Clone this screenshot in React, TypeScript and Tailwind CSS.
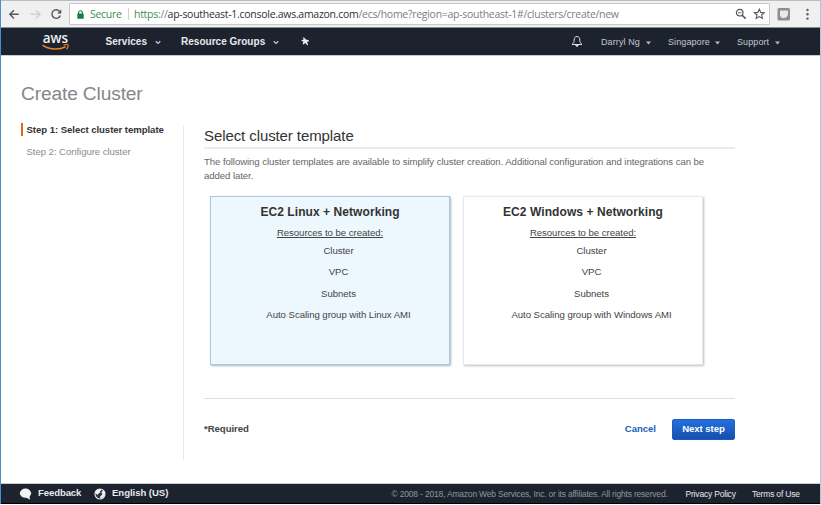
import React from "react";

const resources = ["Cluster", "VPC", "Subnets"];

function Caret() {
  return (
    <svg width="5" height="4" viewBox="0 0 5 4" className="shrink-0">
      <path d="M0 0.4h5L2.5 3.4z" fill="#b9bdc2" />
    </svg>
  );
}

function Chevron() {
  return (
    <svg width="6" height="5" viewBox="0 0 6 5" fill="none" stroke="#c9ccd0" strokeWidth="1.2" className="shrink-0">
      <path d="M0.7 1.2L3 3.4L5.3 1.2" />
    </svg>
  );
}

function BrowserBar() {
  return (
    <div className="flex h-[28px] items-start border-b border-[#8b8e92] bg-[#f0f0f1]">
      <div className="flex h-full w-full items-start border-t border-[#bdbdbf]">
        <svg width="68" height="26" viewBox="0 0 68 26" className="shrink-0" fill="none" strokeWidth="1.4">
          <path d="M17.700 13.3H9M13 9.2L8.8 13.3L13 17.4" stroke="#555759" />
          <path d="M29.500 13.3H38.500M34.800 9.2L39 13.3L34.800 17.4" stroke="#cfcfd0" />
          <path d="M58.800 10.600A4.300 4.300 0 1 0 59.300 14.500" stroke="#555759" />
          <path d="M60.300 8.400V12.600H56.100z" fill="#555759" />
        </svg>
        <div className="mt-[2px] flex h-[22px] w-[701px] shrink-0 items-center rounded-[1px] border border-[#c8c8c9] bg-white pl-[7px] pr-[4px] font-['Open_Sans',sans-serif] text-[10.5px] leading-[20px]">
          <svg width="7" height="9" viewBox="0 0 7 9" className="shrink-0">
            <path d="M1.600 4V2.700a1.900 1.900 0 0 1 3.800 0V4" fill="none" stroke="#17803c" strokeWidth="1.100" />
            <rect x="0.300" y="3.600" width="6.400" height="5.200" rx="0.400" fill="#17803c" />
          </svg>
          <span className="ml-[6px] w-[32px] whitespace-nowrap tracking-[-0.300px] text-[#3b8d55]">Secure</span>
          <span className="ml-[6px] h-[12px] w-px bg-[#cfcfcf]" />
          <span className="ml-[5px] flex-1 whitespace-nowrap tracking-[-0.280px] text-[#7d7d7d]">
            <span className="text-[#3b8d55]">https</span>://<span className="text-[#303030]">ap-southeast-1.console.aws.amazon.com</span>/ecs/home?region=ap-southeast-1#/clusters/create/new
          </span>
          <svg width="30" height="12" viewBox="0 0 30 12" className="shrink-0" fill="none" stroke="#555759" strokeWidth="1.200">
            <circle cx="4.700" cy="4.700" r="3.300" />
            <path d="M7.200 7.200L10.600 10.600" strokeWidth="1.600" />
            <path d="M3 4.700h3.400" strokeWidth="0.900" />
            <path d="M24.300 1.200l1.400 3.200 3.500.3-2.600 2.300.8 3.400-3.100-1.800-3.100 1.800.8-3.400-2.600-2.300 3.500-.3z" strokeWidth="1.100" />
          </svg>
        </div>
        <svg width="50" height="26" viewBox="0 0 50 26" className="shrink-0">
          <rect x="7.500" y="7" width="12.500" height="12.500" rx="1.500" fill="#8f8f8f" />
          <path d="M10 9.500h8v3.500q-.5 4-4.500 4h-1.500l-2-2z" fill="#e9e9e9" />
          <circle cx="37.500" cy="9" r="1.200" fill="#5c5c5c" />
          <circle cx="37.500" cy="13.300" r="1.200" fill="#5c5c5c" />
          <circle cx="37.500" cy="17.600" r="1.200" fill="#5c5c5c" />
        </svg>
      </div>
    </div>
  );
}

function AwsNav() {
  return (
    <div className="flex h-[27px] items-center bg-[#1c232f] pl-[41px] text-[#e7e9eb]">
      <div className="flex w-[27px] flex-col items-center">
        <span className="h-[12px] font-['Open_Sans',sans-serif] text-[13.5px] leading-[11px] font-semibold text-[#eef0f2]">aws</span>
        <svg width="27" height="7" viewBox="0 0 27 7" fill="none" className="mt-[-1px]">
          <path d="M0.500 1.200C6.500 5.800 17 6.400 23.800 2.600" stroke="#e58a1f" strokeWidth="1.500" />
          <path d="M21.500 1.200c2-.7 4.200-.7 4.600-.2s-.2 2.700-1.600 4.200" stroke="#e58a1f" strokeWidth="1.100" />
        </svg>
      </div>
      <span className="ml-[36.500px] w-[42px] whitespace-nowrap text-[10px] font-bold tracking-[0.050px]">Services</span>
      <span className="ml-[7px] mt-[2px]"><Chevron /></span>
      <span className="ml-[20.500px] w-[86px] whitespace-nowrap text-[10px] font-bold tracking-[0.020px]">Resource Groups</span>
      <span className="ml-[6px] mt-[2px]"><Chevron /></span>
      <svg width="9" height="9" viewBox="0 0 9 9" className="ml-[22px] shrink-0" fill="#e7e9eb">
        <path d="M2.900 0.300L4.600 2.300L7.700 3.200L8 4.200L6 5.100L7.200 8L6.300 8.200L4.200 5.900L2.400 7.400L1.700 6.900L2.300 4.600L0.400 3.800L0.500 3.100L2.500 2.700L2.100 0.700z" />
      </svg>
      <svg width="12" height="13" viewBox="0 0 12 13" className="ml-[261px] shrink-0" fill="none" stroke="#dcdfe2" strokeWidth="1">
        <path d="M6 1.500C3.800 1.500 3.200 3.300 3.200 5.200C3.200 7.500 2.400 8.200 1 9.500H11C9.600 8.200 8.800 7.500 8.800 5.200C8.800 3.300 8.200 1.500 6 1.500z" />
        <path d="M4.800 9.800c0 2.200 2.400 2.200 2.400 0" fill="#dcdfe2" />
      </svg>
      <div className="ml-[18px] mt-[2px] flex items-center whitespace-nowrap text-[9px] tracking-[0.100px] text-[#c3c7cc]">
        <span className="w-[40px]">Darryl Ng</span>
        <span className="ml-[5px] mr-[17px]"><Caret /></span>
        <span className="w-[42px]">Singapore</span>
        <span className="ml-[5px] mr-[17px]"><Caret /></span>
        <span className="w-[33px]">Support</span>
        <span className="ml-[5px]"><Caret /></span>
      </div>
    </div>
  );
}

function TemplateCard({ title, platform, selected }: { title: string; platform: string; selected?: boolean }) {
  return (
    <div
      className={
        "flex h-[169px] w-[240px] flex-col items-center border pt-[8px] text-center tracking-[-0.040px] text-[#444] " +
        (selected
          ? "border-[#a9c8e2] bg-[#edf7fe] shadow-[1px_1px_2px_#a9b5c0]"
          : "border-[#e8e8e8] bg-white shadow-[1px_1px_2px_#c0c0c0]")
      }
    >
      <h3 className="text-[12px] leading-[15px] font-bold tracking-[0.070px] text-[#333]">{title}</h3>
      <p className="mt-[7px] text-[9.600px] leading-[12px] underline">Resources to be created:</p>
      <ul className="mt-[1px] w-full pl-[17px] text-[9.600px] leading-[21.400px]">
        {resources.map((item) => (
          <li key={item}>{item}</li>
        ))}
        <li>Auto Scaling group with {platform} AMI</li>
      </ul>
    </div>
  );
}

export default function App() {
  return (
    <div className="h-[505px] w-[821px] overflow-hidden bg-white font-['Liberation_Sans',Arial,sans-serif]">
      <div className="flex h-[504px] flex-col border-l border-r border-l-[#4b8fc7] border-r-[#a3c8e4]">
        <BrowserBar />
        <AwsNav />
        <main className="flex-1 border-b border-t border-b-[#c6cdd2] border-t-[#c9cbce] pl-[20px] pt-[27px]">
          <h1 className="h-[42px] text-[19.200px] leading-[22px] tracking-[-0.150px] text-[#868686]">Create Cluster</h1>
          <div className="flex h-[335px]">
            <nav className="w-[162px] shrink-0 whitespace-nowrap text-[9.600px] tracking-[-0.060px]">
              <div className="mt-[-2px] flex h-[13px] items-center border-l-2 border-[#d76b16] pl-[3.500px] leading-[13px] font-bold text-[#333]">Step 1: Select cluster template</div>
              <div className="mt-[9px] pl-[5.500px] leading-[13px] text-[#8b8b8b]">Step 2: Configure cluster</div>
            </nav>
            <section className="w-[552px] border-l border-[#e9e9e9] pl-[20px]">
              <h2 className="h-[24px] border-b-2 border-[#ebebeb] pt-px text-[15px] leading-[19px] tracking-[-0.090px] text-[#333]">Select cluster template</h2>
              <p className="mt-[6px] text-[9.600px] leading-[14px] tracking-[-0.070px] whitespace-nowrap text-[#666]">
                The following cluster templates are available to simplify cluster creation. Additional configuration and integrations can be
                <br />
                added later.
              </p>
              <div className="mt-[13px] flex gap-[13px] pl-[6px]">
                <TemplateCard title="EC2 Linux + Networking" platform="Linux" selected />
                <TemplateCard title="EC2 Windows + Networking" platform="Windows" />
              </div>
              <div className="mt-[33px] flex w-[531px] items-center border-t border-[#dedede] pt-[20px] text-[9.600px] font-bold tracking-[-0.050px]">
                <span className="flex-1 text-[#444]">*Required</span>
                <a className="mr-[16px] text-[#1b5fbd]">Cancel</a>
                <button className="h-[21px] w-[63px] rounded-[2px] border border-[#1e5db5] bg-linear-to-b from-[#2271df] to-[#164fae] whitespace-nowrap text-white">Next step</button>
              </div>
            </section>
          </div>
        </main>
        <footer className="flex h-[20px] shrink-0 items-center border-b border-black bg-[#1c232f] pl-[18px] whitespace-nowrap text-[#e7e9eb]">
          <svg width="13" height="12" viewBox="0 0 13 12" className="shrink-0" fill="#f3f3f3">
            <ellipse cx="6.500" cy="5.200" rx="5.600" ry="4.600" />
            <path d="M6.500 9l4.500 2.700L10.300 7z" />
          </svg>
          <span className="ml-[6px] w-[44px] text-[9.600px] font-bold tracking-[-0.120px]">Feedback</span>
          <svg width="12" height="12" viewBox="0 0 12 12" className="ml-[12px] shrink-0">
            <circle cx="6" cy="6" r="5" fill="#303640" stroke="#f1f1f1" strokeWidth="1.100" />
            <path d="M1 4.500C1.500 2 4 0.800 6.500 1L7.500 2.200L6 3.300L6.200 4.600L4.600 5.400L3.800 6.800L2.500 6.200z M8 3.300L9.800 2.400L11 5.200L10.300 8L8.500 9.800L6.800 10.500L5.800 9L7.200 7.400L8.500 6.400L7.500 5z" fill="#f1f1f1" />
          </svg>
          <span className="ml-[6px] text-[9.600px] font-bold tracking-[-0.060px]">English (US)</span>
          <div className="ml-auto mt-[1px] flex pr-[21px] text-[8.500px] tracking-[-0.190px]">
            <span className="w-[294px] text-[#8f969d]">© 2008 - 2018, Amazon Web Services, Inc. or its affiliates. All rights reserved.</span>
            <span className="w-[66.500px]">Privacy Policy</span>
            <span className="w-[47px]">Terms of Use</span>
          </div>
        </footer>
      </div>
    </div>
  );
}
